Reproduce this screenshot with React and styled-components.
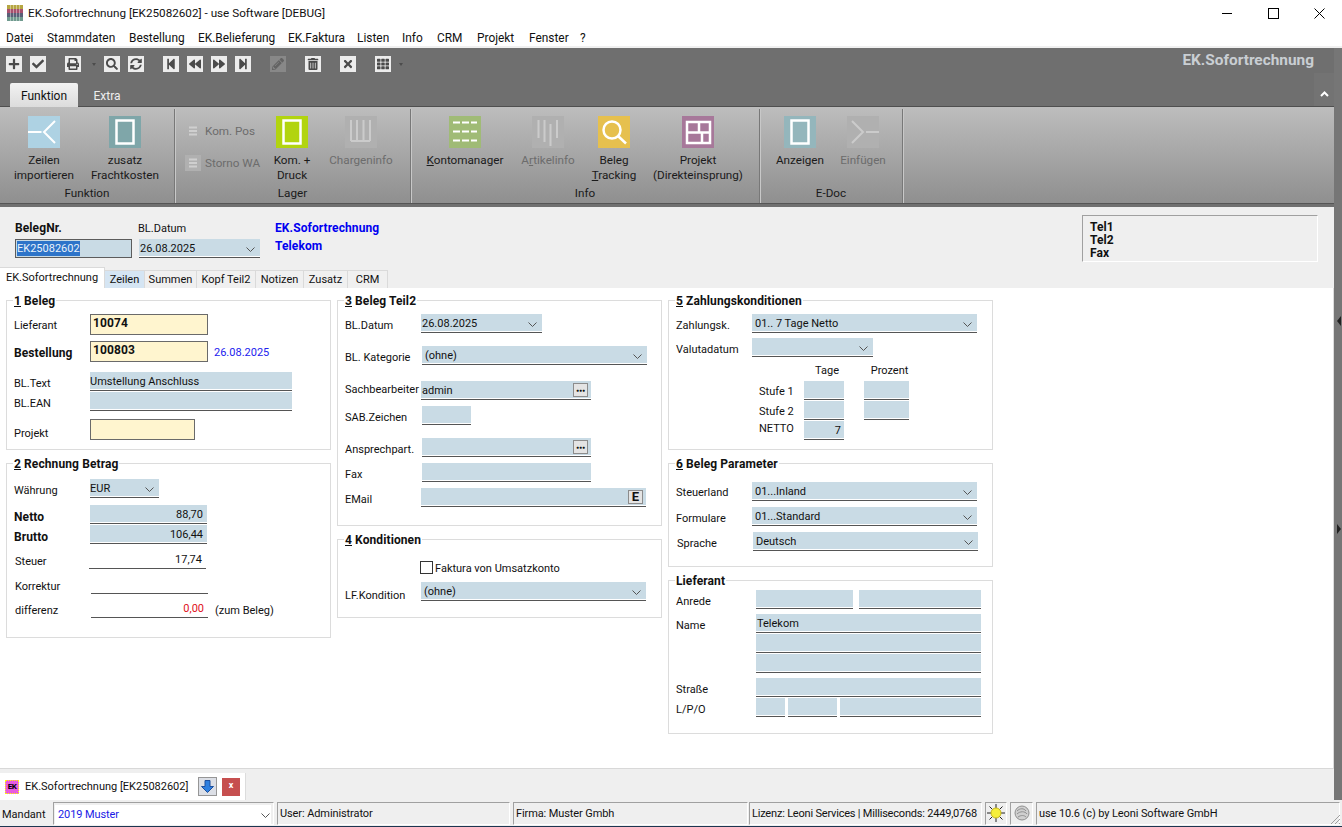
import React from 'react';
import styled, { createGlobalStyle, css } from 'styled-components';
import {
  FaPlus, FaCheck, FaPrint, FaSearch, FaSyncAlt, FaStepBackward, FaBackward, FaForward,
  FaStepForward, FaPencilAlt, FaTrashAlt, FaTimes, FaTh,
} from 'react-icons/fa';

const UI_FONT = '"Roboto", "Liberation Sans", sans-serif';

const boldText = css`
  font-size: 12px;
  font-weight: 700;
  letter-spacing: 0.1px;
`;

const GlobalStyle = createGlobalStyle`
  html, body { margin: 0; padding: 0; background: #efefef; }
  body { font-family: ${UI_FONT}; font-size: 11px; color: #111; overflow: hidden; }
  * { box-sizing: border-box; }
`;

const Page = styled.div`
  width: 1342px;
  height: 827px;
  display: flex;
  flex-direction: column;
  overflow: hidden;
`;

/* window chrome */
const TitleBar = styled.div`
  height: 26px;
  background: #fff;
  display: flex;
  align-items: center;
  padding-left: 7px;
  font-size: 11.7px;
`;

const TitleText = styled.span`
  margin-left: 5px;
  flex: 1;
`;

const WinButton = styled.div`
  width: 46px;
  height: 26px;
  display: flex;
  align-items: center;
  justify-content: center;
`;

const MenuBar = styled.div`
  height: 22px;
  background: #fff;
  border-bottom: 2px solid #f0f0f0;
  display: flex;
  align-items: center;
  padding: 3px 0 0 6px;
  font-size: 11.9px;
`;

const MenuItem = styled.span`
  width: ${p => p.$w}px;
`;

const Body = styled.div`
  height: 752px;
  display: flex;
`;

const Content = styled.div`
  width: 1334px;
  display: flex;
  flex-direction: column;
`;

const SideRail = styled.div`
  position: relative;
  width: 8px;
  background: #767676;
`;

const RailMark = styled.div`
  position: absolute;
  left: 3px;
  top: ${p => p.$top}px;
  width: 0;
  height: 0;
  border-top: 5px solid transparent;
  border-bottom: 5px solid transparent;
  border-${p => (p.$flip ? 'left' : 'right')}: 4px solid #222;
`;

/* top toolbar */
const ToolStrip = styled.div`
  height: 59px;
  flex: none;
  background: #6f6f6f;
  display: flex;
  flex-direction: column;
`;

const ToolRow = styled.div`
  height: 35px;
  flex: none;
  display: flex;
  align-items: flex-start;
  padding: 2px 20px 0 0;
`;

const ToolButton = styled.div`
  width: 16px;
  height: 16px;
  margin: 6px 0 0 ${p => p.$gap}px;
  background: ${p => (p.$off ? '#888' : '#ececec')};
  color: ${p => (p.$off ? '#636363' : '#4a4a4a')};
  display: flex;
  align-items: center;
  justify-content: center;
  font-size: 12px;
`;

const ToolArrow = styled.div`
  width: 0;
  height: 0;
  margin: 13px 0 0 ${p => p.$gap}px;
  border-left: 2.5px solid transparent;
  border-right: 2.5px solid transparent;
  border-top: 3px solid #4c4c4c;
`;

const ModuleTitle = styled.div`
  margin: 1px 0 0 auto;
  height: 18px;
  line-height: 18px;
  font-size: 15.4px;
  font-weight: 700;
  color: #c9ced3;
`;

const RibbonTabs = styled.div`
  position: relative;
  height: 24px;
  flex: none;
  display: flex;
  align-items: stretch;
  padding-left: 10px;
  font-size: 12px;
  border-bottom: 1px solid #4f4f4f;
`;

const RibbonTab = styled.div`
  width: ${p => p.$w}px;
  height: 24px;
  background: ${p => (p.$active ? 'linear-gradient(#f2f2f2, #dcdcdc)' : 'transparent')};
  color: ${p => (p.$active ? '#111' : '#eee')};
  border-radius: 2px 2px 0 0;
  text-align: center;
  line-height: 26px;
`;

const CollapseBox = styled.div`
  margin-left: auto;
  margin-top: -10px;
  width: 20px;
  height: 33px;
  background: #737373;
  display: flex;
  align-items: flex-end;
  justify-content: center;
  padding-bottom: 9px;
`;

/* ribbon */
const Ribbon = styled.div`
  height: 100px;
  flex: none;
  background: #707070;
`;

const RibbonInner = styled.div`
  height: 97px;
  background: linear-gradient(#bdbdbd, #8f8f8f);
  border-bottom: 1px solid #555;
  display: flex;
  font-size: 11.7px;
`;

const RibbonGroup = styled.div`
  width: ${p => p.$w}px;
  margin-top: 2px;
  border-right: 1px solid #787878;
  box-shadow: 1px 0 0 #c8c8c8;
  display: flex;
  flex-direction: column;
`;

const RibbonItems = styled.div`
  height: 77px;
  flex: none;
  padding: 7px 0 0 ${p => p.$pad}px;
  display: flex;
`;

const GroupCaption = styled.div`
  height: 15px;
  line-height: 15px;
  text-align: center;
  color: #1a1a1a;
`;

const RibbonItem = styled.div`
  width: ${p => p.$w}px;
  display: flex;
  flex-direction: column;
  align-items: center;
  color: ${p => (p.$off ? '#6c6c6c' : '#1a1a1a')};
  line-height: 15px;
  text-align: center;
  white-space: nowrap;
`;

const Tile = styled.svg`
  width: 32px;
  height: 32px;
  margin-bottom: 5px;
  flex: none;
  background: ${p => p.$bg};
`;

const SmallStack = styled.div`
  width: ${p => p.$w}px;
  display: flex;
  flex-direction: column;
  gap: 16px;
  padding: 7px 0 0 4px;
  color: #6c6c6c;
`;

const SmallItem = styled.div`
  height: 16px;
  display: flex;
  align-items: center;
  gap: 4px;
`;

const SmallIcon = styled.svg`
  width: 16px;
  height: 16px;
  background: ${p => (p.$tile ? '#b0b0b0' : 'transparent')};
`;

/* document header */
const DocHeader = styled.div`
  height: 61px;
  flex: none;
  background: #efefef;
  display: flex;
  padding-left: 15px;
`;

const HeadColumn = styled.div`
  width: ${p => p.$w}px;
  padding-top: 12px;
  flex: none;
`;

const HeadLabel = styled.div`
  height: 18px;
  line-height: 19px;
  margin-bottom: 2px;
  ${p => p.$bold && boldText}
`;

const DocNumber = styled.div`
  width: 117px;
  height: 19px;
  background: #c9dbe5;
  border: 1px solid #5c5c5c;
  padding: 1px;
  line-height: 15px;
`;

const Selected = styled.span`
  display: inline-block;
  height: 15px;
  background: #2d74c9;
  color: #e9f2fa;
`;

const BlueLine = styled.div`
  height: 18px;
  line-height: 18px;
  color: #0000f0;
  ${boldText}
`;

const PhoneBox = styled.div`
  width: 236px;
  height: 47px;
  margin: 8px 16px 0 auto;
  padding: 5px 7px;
  border: 1px solid;
  border-color: #a0a0a0 #fff #fff #a0a0a0;
  line-height: 13px;
  ${boldText}
`;

/* tabs */
const TabStrip = styled.div`
  height: 20px;
  flex: none;
  background: #efefef;
  display: flex;
  align-items: flex-end;
`;

const PageTab = styled.div`
  width: ${p => p.$w}px;
  height: ${p => (p.$active ? 21 : 18)}px;
  background: ${p => (p.$active ? '#fff' : p.$hi ? '#d5e5f3' : '#f0f0f0')};
  border: 1px solid #dadada;
  border-width: 1px 1px 0 0;
  text-align: center;
  line-height: ${p => (p.$active ? 20 : 18)}px;
`;

/* form */
const FormPanel = styled.div`
  height: 481px;
  flex: none;
  background: #fff;
  border-right: 1px solid #dcdcdc;
  border-bottom: 1px solid #d8d8d8;
  padding: 12px 0 0 6px;
  display: flex;
  gap: 6px;
`;

const FormColumn = styled.div`
  width: 325px;
  display: flex;
  flex-direction: column;
  gap: 13px;
`;

const Group = styled.div`
  position: relative;
  height: ${p => p.$h}px;
  border: 1px solid #dcdcdc;
`;

const Legend = styled.div`
  position: absolute;
  left: 6px;
  top: -7px;
  padding: 0 1px;
  height: 14px;
  line-height: 14px;
  background: #fff;
  ${boldText}
  u { text-decoration: underline; }
`;

const Row = styled.div`
  display: flex;
  height: ${p => p.$h || 19}px;
  margin-top: ${p => p.$mt}px;
  padding-left: 7px;
`;

const Label = styled.div`
  width: ${p => p.$w || 76}px;
  height: 18px;
  line-height: 20px;
  flex: none;
  margin-top: ${p => (p.$top === undefined ? 2 : p.$top)}px;
  margin-left: ${p => p.$ml || 0}px;
  white-space: nowrap;
  ${p => p.$bold && boldText}
`;

const Field = styled.div`
  width: ${p => p.$w}px;
  height: 19px;
  flex: none;
  margin-left: ${p => p.$ml || 0}px;
  padding: 0 ${p => p.$pr || 4}px 0 ${p => p.$pl === undefined ? 0 : p.$pl}px;
  background: ${p => (p.$plain ? 'transparent' : '#c9dbe5')};
  border-bottom: 1px solid #555;
  box-shadow: ${p => (p.$plain ? 'none' : 'inset 0 -1px 0 #fff')};
  display: flex;
  justify-content: ${p => (p.$right ? 'flex-end' : 'flex-start')};
  line-height: 19px;
  white-space: nowrap;
  color: ${p => p.$color || '#111'};
`;

const Chevron = styled.svg`
  width: 9px;
  height: 5px;
  margin: 8px 1px 0 auto;
  flex: none;
`;

const LookupButton = styled.div`
  width: 15px;
  height: 14px;
  margin: 2px -1px 0 auto;
  background: #e4e4e4;
  border: 1px solid #8c8c8c;
  display: flex;
  align-items: center;
  justify-content: center;
  font-weight: 700;
  font-size: ${p => (p.$big ? 13 : 5)}px;
  line-height: 10px;
`;

const YellowInput = styled.div`
  width: ${p => p.$w}px;
  height: 21px;
  flex: none;
  background: #fff5cf;
  border: 1px solid #6a6a6a;
  padding-left: 2px;
  line-height: 17px;
  ${boldText}
`;

const Note = styled.div`
  margin: 2px 0 0 ${p => p.$ml}px;
  height: 18px;
  line-height: 20px;
  color: ${p => p.$color || '#111'};
  white-space: nowrap;
`;

const CheckBox = styled.div`
  width: 13px;
  height: 13px;
  flex: none;
  margin-left: 75px;
  border: 1px solid #333;
  background: #fff;
`;

const CheckText = styled.div`
  margin-left: 2px;
  line-height: 15px;
`;

const FieldStack = styled.div`
  display: flex;
  flex-direction: column;
  gap: 1px;
`;

const FieldPair = styled.div`
  display: flex;
  gap: ${p => p.$gap}px;
`;

const TermsGrid = styled.div`
  display: grid;
  grid-template-columns: 45px 40px 20px 45px;
  grid-auto-rows: 19px;
  row-gap: 1px;
  margin: 4px 0 0 90px;
  width: 150px;
`;

const TermsHead = styled.div`
  grid-column: ${p => p.$col};
  padding-left: 6px;
  text-align: center;
  line-height: 20px;
`;

const TermsLabel = styled.div`
  grid-column: 1;
  line-height: 20px;
  margin-top: ${p => p.$top}px;
`;

/* window list */
const WindowBar = styled.div`
  height: 31px;
  flex: none;
  padding-top: 4px;
  background: #efefef;
`;

const WindowTab = styled.div`
  width: 246px;
  height: 27px;
  background: #fff;
  border-right: 1px solid #dcdcdc;
  display: flex;
  align-items: center;
  padding-left: 5px;
`;

const DocBadge = styled.div`
  width: 14px;
  height: 14px;
  background: #e85be0;
  border: 1px dotted #ff0;
  color: #000;
  font-size: 8px;
  font-weight: 700;
  line-height: 12px;
  text-align: center;
  letter-spacing: -0.5px;
`;

const WindowTitle = styled.span`
  margin-left: 6px;
  width: 173px;
  white-space: nowrap;
`;

const NavButton = styled.div`
  width: 19px;
  height: 19px;
  background: #dcdfe6;
  border: 1px solid #969696;
  display: flex;
  align-items: center;
  justify-content: center;
`;

const CloseButton = styled.div`
  width: 18px;
  height: 18px;
  margin-left: 5px;
  background: #c64f4f;
  color: #fff;
  font-size: 9px;
  font-weight: 700;
  line-height: 15px;
  text-align: center;
`;

/* status bar */
const StatusBar = styled.div`
  position: relative;
  height: 27px;
  flex: none;
  background: #efefef;
  border-bottom: 1px solid #1d3550;
  padding-top: 2px;
  display: flex;
`;

const StatusCell = styled.div`
  width: ${p => p.$w}px;
  height: 23px;
  margin-left: ${p => p.$gap}px;
  flex: none;
  border: 1px solid;
  border-color: #a0a0a0 #fff #fff #a0a0a0;
  padding-left: ${p => p.$pl === undefined ? 2 : p.$pl}px;
  line-height: 22px;
  white-space: nowrap;
  display: flex;
  letter-spacing: ${p => (p.$tight ? -0.2 : -0.1)}px;
`;

const MandantLabel = styled.div`
  width: 53px;
  padding-left: 2px;
  line-height: 25px;
`;

const MandantSelect = styled.div`
  flex: 1;
  margin: 2px 2px 0 1px;
  height: 19px;
  background: #fff;
  color: #1a1ae6;
  display: flex;
  padding-left: 3px;
  line-height: 19px;
`;

const StatusIcon = styled.svg`
  width: 20px;
  height: 20px;
  margin: 0 auto;
`;

const Grip = styled.svg`
  position: absolute;
  right: 1px;
  bottom: 1px;
  width: 12px;
  height: 12px;
`;

const tools = [
  { icon: FaPlus, gap: 6 }, { icon: FaCheck, gap: 8 }, { icon: FaPrint, gap: 19 }, { arrow: true, gap: 11 },
  { icon: FaSearch, gap: 8 }, { icon: FaSyncAlt, gap: 8 }, { icon: FaStepBackward, gap: 19 },
  { icon: FaBackward, gap: 8 }, { icon: FaForward, gap: 8 }, { icon: FaStepForward, gap: 8 },
  { icon: FaPencilAlt, gap: 19, off: true }, { icon: FaTrashAlt, gap: 19 }, { icon: FaTimes, gap: 19 },
  { icon: FaTh, gap: 19 }, { arrow: true, gap: 8 },
];

const menus = [
  ['Datei', 41], ['Stammdaten', 82], ['Bestellung', 69], ['EK.Belieferung', 90], ['EK.Faktura', 69],
  ['Listen', 45], ['Info', 35], ['CRM', 40], ['Projekt', 52], ['Fenster', 51], ['?', 20],
];

const pageTabs = [
  ['Zeilen', 40, true], ['Summen', 52], ['Kopf Teil2', 59], ['Notizen', 48], ['Zusatz', 44], ['CRM', 40],
];

const Down = () => (
  <Chevron viewBox="0 0 9 5"><path d="M0.5 0.5 4.5 4.5 8.5 0.5" fill="none" stroke="#555" /></Chevron>
);

const Frame = ({ bg }) => (
  <Tile $bg={bg} viewBox="0 0 32 32">
    <rect x="7.5" y="4.5" width="17" height="23" fill="none" stroke="#fff" strokeWidth="2.5" />
  </Tile>
);

const ThreeLines = ({ tile }) => (
  <SmallIcon $tile={tile} viewBox="0 0 16 16">
    <path d="M4 4.5h8M4 8h8M4 11.5h8" stroke="#cfcfcf" strokeWidth="2" />
  </SmallIcon>
);

const App = () => (
  <Page>
    <GlobalStyle />
    <TitleBar>
      <svg width="16" height="16" viewBox="0 0 16 16">
        <rect width="16" height="4" fill="#b6a642" />
        <rect y="4" width="16" height="4" fill="#a8506e" />
        <rect y="8" width="16" height="4" fill="#5a5f78" />
        <rect y="12" width="16" height="4" fill="#6f9a8e" />
        <path d="M3.5 0v16M6.5 0v16M9.5 0v16M12.5 0v16" stroke="#fff" strokeWidth="1" opacity="0.4" />
      </svg>
      <TitleText>EK.Sofortrechnung [EK25082602] - use Software [DEBUG]</TitleText>
      <WinButton><svg width="11" height="11" viewBox="0 0 11 11"><path d="M0 5.5h10" stroke="#000" /></svg></WinButton>
      <WinButton><svg width="11" height="11" viewBox="0 0 11 11"><rect x="0.5" y="0.5" width="10" height="10" fill="none" stroke="#000" /></svg></WinButton>
      <WinButton><svg width="11" height="11" viewBox="0 0 11 11"><path d="M0.5 0.5l10 10M10.5 0.5l-10 10" stroke="#000" /></svg></WinButton>
    </TitleBar>
    <MenuBar>
      {menus.map(([name, w]) => <MenuItem key={name} $w={w}>{name}</MenuItem>)}
    </MenuBar>

    <Body>
      <Content>
        <ToolStrip>
          <ToolRow>
            {tools.map((t, i) => (t.arrow
              ? <ToolArrow key={i} $gap={t.gap} />
              : <ToolButton key={i} $gap={t.gap} $off={t.off}><t.icon /></ToolButton>))}
            <ModuleTitle>EK.Sofortrechnung</ModuleTitle>
          </ToolRow>
          <RibbonTabs>
            <RibbonTab $active $w={68}>Funktion</RibbonTab>
            <RibbonTab $w={58}>Extra</RibbonTab>
            <CollapseBox>
              <svg width="9" height="6" viewBox="0 0 9 6"><path d="M1 5 4.5 1.5 8 5" fill="none" stroke="#fff" strokeWidth="2" /></svg>
            </CollapseBox>
          </RibbonTabs>
        </ToolStrip>

        <Ribbon>
          <RibbonInner>
            <RibbonGroup $w={175}>
              <RibbonItems $pad={6}>
                <RibbonItem $w={76}>
                  <Tile $bg="#aed2e3" viewBox="0 0 32 32">
                    <path d="M0 16h13.5M27 5 16 16l11 11" fill="none" stroke="#fff" strokeWidth="2" />
                  </Tile>
                  Zeilen<br />importieren
                </RibbonItem>
                <RibbonItem $w={86}>
                  <Frame bg="#7fa6a9" />
                  zusatz<br />Frachtkosten
                </RibbonItem>
              </RibbonItems>
              <GroupCaption>Funktion</GroupCaption>
            </RibbonGroup>

            <RibbonGroup $w={236}>
              <RibbonItems $pad={6}>
                <SmallStack $w={88}>
                  <SmallItem><ThreeLines />Kom. Pos</SmallItem>
                  <SmallItem><ThreeLines tile />Storno WA</SmallItem>
                </SmallStack>
                <RibbonItem $w={46}>
                  <Frame bg="#b2d40f" />
                  Kom. +<br />Druck
                </RibbonItem>
                <RibbonItem $w={92} $off>
                  <Tile $bg="#b0b0b0" viewBox="0 0 32 32">
                    <path d="M6 4v21M12 4v21M18.5 4v21M25 4v21M6 25h19" fill="none" stroke="#cbcbcb" strokeWidth="2" />
                  </Tile>
                  Chargeninfo
                </RibbonItem>
              </RibbonItems>
              <GroupCaption>Lager</GroupCaption>
            </RibbonGroup>

            <RibbonGroup $w={349}>
              <RibbonItems $pad={10}>
                <RibbonItem $w={88}>
                  <Tile $bg="#a0bb76" viewBox="0 0 32 32">
                    <path d="M4 6.5h7M13 6.5h7M22 6.5h6M4 15.5h7M13 15.5h7M22 15.5h6M4 24.5h7M13 24.5h7M22 24.5h6" stroke="#fff" strokeWidth="2" />
                  </Tile>
                  <span><u>K</u>ontomanager</span>
                </RibbonItem>
                <RibbonItem $w={78} $off>
                  <Tile $bg="#b0b0b0" viewBox="0 0 32 32">
                    <path d="M6.5 4v18M12.5 4v22M18.5 8v22M25 4v18" fill="none" stroke="#cbcbcb" strokeWidth="2" />
                  </Tile>
                  <span>A<u>r</u>tikelinfo</span>
                </RibbonItem>
                <RibbonItem $w={54}>
                  <Tile $bg="#e6c04e" viewBox="0 0 32 32">
                    <circle cx="14" cy="14" r="8.5" fill="none" stroke="#fff" strokeWidth="2.5" />
                    <path d="M20 20l8 7.5" stroke="#fff" strokeWidth="2.5" />
                  </Tile>
                  <span>Beleg<br /><u>T</u>racking</span>
                </RibbonItem>
                <RibbonItem $w={114}>
                  <Tile $bg="#a7789a" viewBox="0 0 32 32">
                    <path d="M5 6h23v21H5zM5 16.5h23M17 6v10.5M20 16.5V27" fill="none" stroke="#fff" strokeWidth="2.5" />
                  </Tile>
                  Projekt<br />(Direkteinsprung)
                </RibbonItem>
              </RibbonItems>
              <GroupCaption>Info</GroupCaption>
            </RibbonGroup>

            <RibbonGroup $w={143}>
              <RibbonItems $pad={10}>
                <RibbonItem $w={60}>
                  <Frame bg="#94b6bc" />
                  Anzeigen
                </RibbonItem>
                <RibbonItem $w={66} $off>
                  <Tile $bg="#b0b0b0" viewBox="0 0 32 32">
                    <path d="M5 5l11 11L5 27M19 16h13" fill="none" stroke="#cbcbcb" strokeWidth="2" />
                  </Tile>
                  Einfügen
                </RibbonItem>
              </RibbonItems>
              <GroupCaption>E-Doc</GroupCaption>
            </RibbonGroup>
          </RibbonInner>
        </Ribbon>

        <DocHeader>
          <HeadColumn $w={123}>
            <HeadLabel $bold>BelegNr.</HeadLabel>
            <DocNumber><Selected>EK25082602</Selected></DocNumber>
          </HeadColumn>
          <HeadColumn $w={137}>
            <HeadLabel>BL.Datum</HeadLabel>
            <Field $w={121} $ml={1} $pl={1}>26.08.2025<Down /></Field>
          </HeadColumn>
          <HeadColumn $w={200}>
            <BlueLine>EK.Sofortrechnung</BlueLine>
            <BlueLine>Telekom</BlueLine>
          </HeadColumn>
          <PhoneBox>Tel1<br />Tel2<br />Fax</PhoneBox>
        </DocHeader>

        <TabStrip>
          <PageTab $active $w={105}>EK.Sofortrechnung</PageTab>
          {pageTabs.map(([name, w, hi]) => <PageTab key={name} $w={w} $hi={hi}>{name}</PageTab>)}
        </TabStrip>

        <FormPanel>
          <FormColumn>
            <Group $h={150}>
              <Legend><u>1</u> Beleg</Legend>
              <Row $mt={13} $h={21}>
                <Label>Lieferant</Label>
                <YellowInput $w={118}>10074</YellowInput>
              </Row>
              <Row $mt={6} $h={21}>
                <Label $bold>Bestellung</Label>
                <YellowInput $w={118}>100803</YellowInput>
                <Note $ml={6} $color="#2222ee">26.08.2025</Note>
              </Row>
              <Row $mt={10}>
                <Label>BL.Text</Label>
                <Field $w={202}>Umstellung Anschluss</Field>
              </Row>
              <Row $mt={1}>
                <Label>BL.EAN</Label>
                <Field $w={202} />
              </Row>
              <Row $mt={8} $h={21}>
                <Label $top={5}>Projekt</Label>
                <YellowInput $w={105} />
              </Row>
            </Group>
            <Group $h={175}>
              <Legend><u>2</u> Rechnung Betrag</Legend>
              <Row $mt={15}>
                <Label>Währung</Label>
                <Field $w={69}>EUR<Down /></Field>
              </Row>
              <Row $mt={7}>
                <Label $bold>Netto</Label>
                <Field $w={117} $right>88,70</Field>
              </Row>
              <Row $mt={1}>
                <Label $bold>Brutto</Label>
                <Field $w={117} $right>106,44</Field>
              </Row>
              <Row $mt={6}>
                <Label $ml={1} $w={75}>Steuer</Label>
                <Field $w={117} $ml={-1} $plain $right>17,74</Field>
              </Row>
              <Row $mt={6}>
                <Label $ml={1} $w={75}>Korrektur</Label>
                <Field $w={117} $ml={1} $plain />
              </Row>
              <Row $mt={5}>
                <Label $ml={1} $w={75}>differenz</Label>
                <Field $w={117} $ml={1} $plain $right $color="#e0101a">0,00</Field>
                <Note $ml={7}>(zum Beleg)</Note>
              </Row>
            </Group>
          </FormColumn>

          <FormColumn>
            <Group $h={226}>
              <Legend><u>3</u> Beleg Teil2</Legend>
              <Row $mt={13}>
                <Label>BL.Datum</Label>
                <Field $w={121} $pl={1}>26.08.2025<Down /></Field>
              </Row>
              <Row $mt={13}>
                <Label>BL. Kategorie</Label>
                <Field $w={225} $ml={1} $pl={3}>(ohne)<Down /></Field>
              </Row>
              <Row $mt={16}>
                <Label $top={-1}>Sachbearbeiter</Label>
                <Field $w={170} $pl={1}>admin<LookupButton>●●●</LookupButton></Field>
              </Row>
              <Row $mt={6}>
                <Label>SAB.Zeichen</Label>
                <Field $w={49} $ml={1} />
              </Row>
              <Row $mt={13}>
                <Label>Ansprechpart.</Label>
                <Field $w={169} $ml={1}><LookupButton>●●●</LookupButton></Field>
              </Row>
              <Row $mt={6}>
                <Label>Fax</Label>
                <Field $w={169} $ml={1} />
              </Row>
              <Row $mt={6}>
                <Label>EMail</Label>
                <Field $w={225}><LookupButton $big>E</LookupButton></Field>
              </Row>
            </Group>
            <Group $h={79}>
              <Legend><u>4</u> Konditionen</Legend>
              <Row $mt={21} $h={13}>
                <CheckBox />
                <CheckText>Faktura von Umsatzkonto</CheckText>
              </Row>
              <Row $mt={8}>
                <Label $top={4}>LF.Kondition</Label>
                <Field $w={225} $pl={3}>(ohne)<Down /></Field>
              </Row>
            </Group>
          </FormColumn>

          <FormColumn>
            <Group $h={150}>
              <Legend><u>5</u> Zahlungskonditionen</Legend>
              <Row $mt={13}>
                <Label>Zahlungsk.</Label>
                <Field $w={225} $pl={3}>01.. 7 Tage Netto<Down /></Field>
              </Row>
              <Row $mt={5}>
                <Label>Valutadatum</Label>
                <Field $w={121}><Down /></Field>
              </Row>
              <TermsGrid>
                <TermsHead $col={2}>Tage</TermsHead>
                <TermsHead $col={4}>Prozent</TermsHead>
                <TermsLabel $top={1}>Stufe 1</TermsLabel>
                <Field $w={40} />
                <span />
                <Field $w={45} />
                <TermsLabel $top={1}>Stufe 2</TermsLabel>
                <Field $w={40} />
                <span />
                <Field $w={45} />
                <TermsLabel $top={-2}>NETTO</TermsLabel>
                <Field $w={40} $right $pr={3}>7</Field>
              </TermsGrid>
            </Group>
            <Group $h={104}>
              <Legend><u>6</u> Beleg Parameter</Legend>
              <Row $mt={18}>
                <Label $top={1}>Steuerland</Label>
                <Field $w={225} $pl={3}>01...Inland<Down /></Field>
              </Row>
              <Row $mt={6}>
                <Label>Formulare</Label>
                <Field $w={225} $pl={3}>01...Standard<Down /></Field>
              </Row>
              <Row $mt={6}>
                <Label $ml={1} $w={75}>Sprache</Label>
                <Field $w={225} $ml={1} $pl={3}>Deutsch<Down /></Field>
              </Row>
            </Group>
            <Group $h={154}>
              <Legend>Lieferant</Legend>
              <Row $mt={9}>
                <Label $w={80}>Anrede</Label>
                <FieldPair $gap={6}>
                  <Field $w={97} />
                  <Field $w={122} />
                </FieldPair>
              </Row>
              <Row $mt={5} $h={59}>
                <Label $w={80}>Name</Label>
                <FieldStack>
                  <Field $w={225} $pl={1}>Telekom</Field>
                  <Field $w={225} />
                  <Field $w={225} />
                </FieldStack>
              </Row>
              <Row $mt={5}>
                <Label $w={80}>Straße</Label>
                <Field $w={225} />
              </Row>
              <Row $mt={1}>
                <Label $w={80}>L/P/O</Label>
                <FieldPair $gap={3}>
                  <Field $w={29} />
                  <Field $w={49} />
                  <Field $w={141} />
                </FieldPair>
              </Row>
            </Group>
          </FormColumn>
        </FormPanel>

        <WindowBar>
          <WindowTab>
            <DocBadge>EK</DocBadge>
            <WindowTitle>EK.Sofortrechnung [EK25082602]</WindowTitle>
            <NavButton>
              <svg width="15" height="15" viewBox="0 0 15 15">
                <path d="M5 1.5h5v6h3.5l-6 6-6-6H5z" fill="#2d7fe0" stroke="#1c4f9e" strokeWidth="1" />
              </svg>
            </NavButton>
            <CloseButton>x</CloseButton>
          </WindowTab>
        </WindowBar>
      </Content>
      <SideRail>
        <RailMark $top={268} />
        <RailMark $top={476} $flip />
      </SideRail>
    </Body>

    <StatusBar>
      <MandantLabel>Mandant</MandantLabel>
      <StatusCell $w={221} $gap={0} $pl={0}>
        <MandantSelect>2019 Muster<Down /></MandantSelect>
      </StatusCell>
      <StatusCell $w={233} $gap={3}>User: Administrator</StatusCell>
      <StatusCell $w={235} $gap={3}>Firma: Muster Gmbh</StatusCell>
      <StatusCell $w={233} $gap={1} $tight>Lizenz: Leoni Services | Milliseconds: 2449,0768</StatusCell>
      <StatusCell $w={22} $gap={3} $pl={0}>
        <StatusIcon viewBox="0 0 20 20">
          <path d="M10 1v18M1 10h18M3.5 3.5l13 13M16.5 3.5l-13 13" stroke="#222" strokeWidth="1" />
          <circle cx="10" cy="10" r="5" fill="#f6ee3a" stroke="#c9b81e" />
        </StatusIcon>
      </StatusCell>
      <StatusCell $w={23} $gap={3} $pl={0}>
        <StatusIcon viewBox="0 0 20 20">
          <circle cx="10" cy="10" r="7" fill="#cfcfcf" stroke="#8f8f8f" />
          <path d="M5 8c3-3 7-3 9 0M5 11c3-3 8-3 10 0M6 14c3-2 6-2 8 0" fill="none" stroke="#8f8f8f" />
        </StatusIcon>
      </StatusCell>
      <StatusCell $w={304} $gap={3}>use 10.6 (c) by Leoni Software GmbH</StatusCell>
      <Grip viewBox="0 0 12 12"><path d="M11 2 2 11M11 6 6 11M11 10 10 11" stroke="#a0a0a0" /></Grip>
    </StatusBar>
  </Page>
);

export default App;
